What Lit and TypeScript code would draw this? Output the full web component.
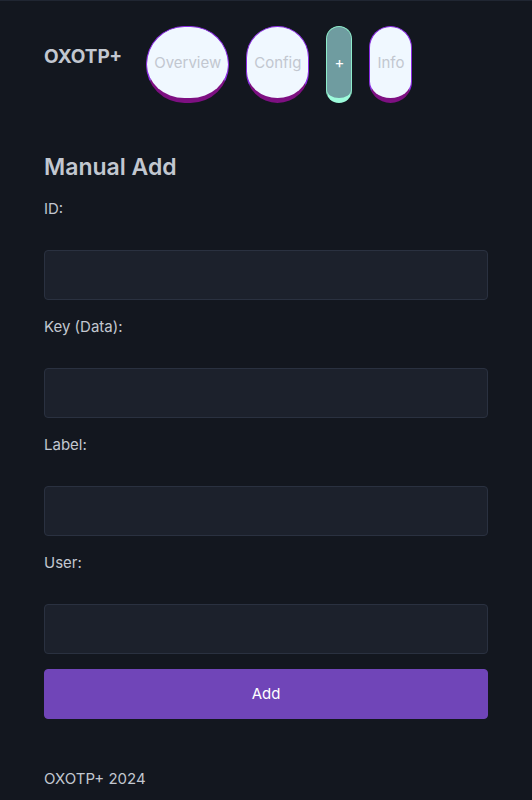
import { LitElement, html, css } from "lit";
import { customElement } from "lit/decorators.js";

const TABS = ["Overview", "Config", "+", "Info"];
const FIELDS = [
  { name: "id", label: "ID:" },
  { name: "key", label: "Key (Data):" },
  { name: "label", label: "Label:" },
  { name: "user", label: "User:" },
];

@customElement("app-root")
export class AppRoot extends LitElement {
  static styles = css`
    :host {
      display: block;
      box-sizing: border-box;
      min-height: 100vh;
      padding: 25px 44px 8px;
      border-top: 1px solid #202632;
      background: #13171f;
      color: #c2c7d0;
      font: 15px/24px Inter, "Liberation Sans", sans-serif;
    }
    .bar {
      display: flex;
      align-items: flex-start;
      gap: 24px;
    }
    .brand {
      margin-top: 19px;
      font-size: 19px;
      font-weight: 700;
    }
    .tabs {
      display: flex;
      gap: 17px;
    }
    .tab {
      box-sizing: border-box;
      height: 77px;
      padding: 24px 7px;
      border: 1px solid blueviolet;
      border-bottom: 5px solid #7e1082;
      border-radius: 40px;
      background: aliceblue;
      color: #c2c7d0;
      text-decoration: none;
    }
    .tab.current {
      border-color: #8eeccb;
      border-bottom-color: #9dfbdb;
      background: #6f9ca0;
      color: #fff;
    }
    h1 {
      margin: 48px 0 14px;
      font-size: 23px;
      line-height: 32px;
      font-weight: 600;
    }
    form {
      display: flex;
      flex-direction: column;
      gap: 15px;
    }
    .field {
      display: flex;
      flex-direction: column;
      gap: 29px;
    }
    .box,
    .submit {
      box-sizing: border-box;
      width: 100%;
      height: 50px;
      margin: 0;
      border: 1px solid #2a3140;
      border-radius: 4px;
      font: inherit;
    }
    .box {
      padding: 0 16px;
      background: #1c212c;
      color: inherit;
    }
    .submit {
      border-color: #7045b8;
      background: #7045b8;
      color: #fff;
    }
    footer {
      margin-top: 48px;
    }
  `;

  render() {
    return html`
      <header class="bar">
        <div class="brand">OXOTP+</div>
        <nav class="tabs">
          ${TABS.map(
            (t) => html`<a class="tab ${t === "+" ? "current" : ""}" href="#">${t}</a>`
          )}
        </nav>
      </header>
      <main>
        <h1>Manual Add</h1>
        <form>
          ${FIELDS.map(
            (f) => html`<div class="field">
              <label for=${f.name}>${f.label}</label>
              <input class="box" id=${f.name} name=${f.name} type="text" />
            </div>`
          )}
          <button class="submit" type="button">Add</button>
        </form>
      </main>
      <footer>OXOTP+ 2024</footer>
    `;
  }
}
